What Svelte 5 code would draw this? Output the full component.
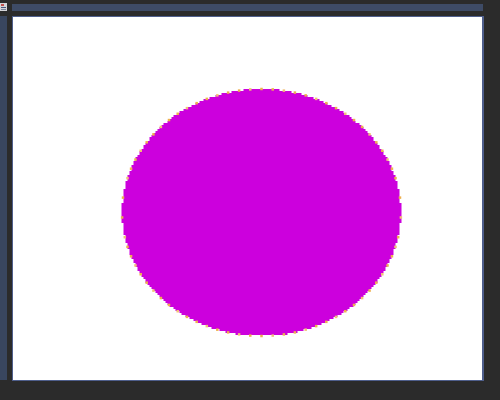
<script>
  // the circle was blown up from a small bitmap: 2px rows, with orange flecks left on the edge
  const cell = 2
  const cx = 248.5
  const cy = 195.5
  const rx = 139.5
  const ry = 123.5

  const rows = []
  const count = Math.round((ry * 2) / cell)
  for (let i = 0; i < count; i++) {
    const y = cy - ry + i * cell
    const mid = y + cell / 2 - cy
    const half = rx * Math.sqrt(Math.max(0, 1 - (mid * mid) / (ry * ry)))
    const snapped = Math.round(half / cell) * cell
    rows.push({ x: cx - snapped, y, w: snapped * 2 })
  }

  const specks = []
  const total = 78
  for (let i = 0; i < total; i++) {
    const a = ((i + 0.5) / total) * Math.PI * 2
    // flecks thin out on the nearly vertical sides
    if (Math.abs(Math.cos(a)) > 0.97 && i % 2) continue
    specks.push({
      x: cx + rx * Math.cos(a) - 1.25,
      y: cy + ry * Math.sin(a) - 1.25,
      tone: i % 3 === 0 ? '#f2c078' : '#eeb04e'
    })
  }
</script>

<div class="window">
  <div class="top">
    <div class="app-icon">
      <svg width="7" height="8" viewBox="0 0 7 8">
        <rect width="7" height="8" fill="#d4d4d8" />
        <rect x="1" y="1" width="3" height="2" fill="#c0504d" />
        <rect x="1" y="4" width="5" height="1" fill="#46557c" />
        <rect x="1" y="6" width="5" height="1" fill="#7a849c" />
      </svg>
    </div>
    <div class="title-bar"></div>
  </div>
  <div class="body">
    <div class="side"></div>
    <div class="canvas">
      <svg width="469" height="363" viewBox="0 0 469 363">
        {#each rows as r}
          <rect x={r.x} y={r.y} width={r.w} height={cell} fill="#cc00dd" />
        {/each}
        {#each specks as s}
          <rect x={s.x} y={s.y} width="2.5" height="2.5" fill={s.tone} />
        {/each}
      </svg>
    </div>
  </div>
</div>

<style>
  :global(body) {
    margin: 0;
    background: #2b2b2b;
  }

  .window {
    width: 500px;
    height: 400px;
    display: flex;
    flex-direction: column;
    background: #2b2b2b;
    overflow: hidden;
  }

  .top {
    display: flex;
    height: 16px;
    flex-shrink: 0;
  }

  .app-icon {
    width: 12px;
    padding-top: 3px;
  }

  .app-icon svg {
    display: block;
  }

  .title-bar {
    width: 471px;
    height: 7px;
    margin-top: 4px;
    background: #3e4b66;
  }

  .body {
    display: flex;
    align-items: flex-start;
  }

  .side {
    width: 7px;
    height: 364px;
    margin-right: 5px;
    background: #39465f;
  }

  .canvas {
    background: #fff;
    border: solid #4f5f8c;
    border-width: 1px 2px 1px 1px;
  }

  .canvas svg {
    display: block;
  }
</style>
